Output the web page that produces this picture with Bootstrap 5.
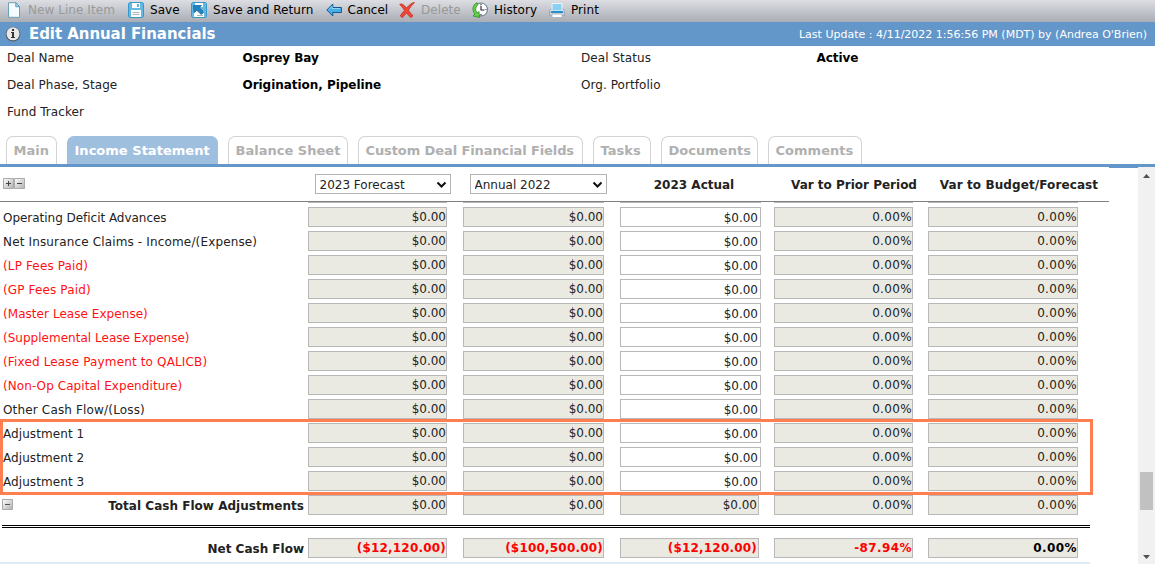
<!DOCTYPE html>
<html lang="en">
<head>
<meta charset="utf-8">
<title>Edit Annual Financials</title>
<meta name="viewport" content="width=device-width, initial-scale=1">
<link rel="stylesheet" href="https://cdn.jsdelivr.net/npm/bootstrap@5.3.0/dist/css/bootstrap.min.css">
<style>
body{font:12px/16px Verdana,"DejaVu Sans",sans-serif;color:#222;background:#fff;height:564px;overflow:hidden}
.toolbar{height:22px;background:linear-gradient(#dcdee3,#a9adb4);color:#000}
.tool{height:20px;white-space:nowrap;letter-spacing:.06px}
.tool svg{width:16px;height:16px;flex:none;margin-right:6px}
.off{color:#999}
.titlebar{height:24px;background:#6397ca;color:#fff}
.titlebar h1{font-size:15px;line-height:24px;font-weight:bold;letter-spacing:-.06px}
.updated{font-size:11px;padding-top:1px}
.facts{height:90px;grid-template-columns:235px 339px 235px 1fr;grid-auto-rows:27px;padding:4px 7px 0;align-content:start;letter-spacing:.06px}
.facts b{color:#000;letter-spacing:-.04px;padding-left:.5px}
.tabs{height:31px;gap:10px;padding-left:6px;border-bottom:3px solid #6397ca}
.tabs a{height:28px;line-height:28px;border:1px solid #d3d3d3;border-bottom:0;border-radius:7px 7px 0 0;color:#b0b0b0;font-size:13px;font-weight:bold;text-decoration:none;padding-left:6.500px;letter-spacing:.02px;white-space:nowrap}
.tabs a.current{background:#9fbfdf;border-color:#9fbfdf;color:#fff}
.body-area{height:397px}
.sheet{width:1109px;flex:none}
.heads{height:35px;border-bottom:1px solid #808080}
.g{display:grid;grid-template-columns:308px 155px 157px 154px 154px 165px;align-items:center}
.heads .form-select{font:12px/16px Verdana,"DejaVu Sans",sans-serif;height:20px;padding:2px 4px 0 3.5px;border:1px solid #b3b3b3;border-radius:0;color:#222;background-position:right 3px center;background-size:11px 11px;background-image:url("data:image/svg+xml,%3csvg xmlns='http://www.w3.org/2000/svg' viewBox='0 0 11 11'%3e%3cpath fill='none' stroke='%23111' stroke-width='2' d='M1.5 3.5l4 4 4-4'/%3e%3c/svg%3e")}
.heads b{white-space:nowrap;text-align:center;padding-top:1px}
.heads b:last-child{letter-spacing:.1px}
.peek{height:1px;margin-bottom:4px}
.peek i{height:1px;background:#b8b8b8}
.line{height:24px}
.lab{padding-left:3px;white-space:nowrap;line-height:22px;letter-spacing:.06px}
.fld{display:block;width:139px;height:20px;border:1px solid #b8b8b8;background:#eaeae2;text-align:right;line-height:18.5px;color:#222;white-space:nowrap}
.pct{letter-spacing:.35px}
.w141{width:141px}.w150{width:150px}
.edit{background:#fff;line-height:20px;padding-right:2px}
.neg{color:#f11}
.total .lab{text-align:right;padding-right:4px;font-weight:bold}
.total .fld:nth-child(4){padding-right:1px}
.marked{position:relative}
.marked::after{content:"";position:absolute;left:0;top:-4px;width:1093px;height:76px;border:3px solid #ff7f50}
.rule{height:3px;border:solid #000;border-width:1px 0;margin:6px 19px 10px 2px}
.net .fld{font-weight:bold;letter-spacing:.2px}
.net .neg{color:#f00}
.net .pct{letter-spacing:.4px}
.pm{width:11px;height:11px;flex:none}
.scroller{width:17px;margin-left:29px;background:#f1f1f1;padding:7px 0 5px}
.thumb{width:13px;height:38px;background:#c1c1c1}
.stub{width:29px;height:1px;background:#6397ca;left:1109px;top:0}
</style>
</head>
<body>
<svg class="position-absolute" width="0" height="0">
<linearGradient id="pm" x2="1" y2="1"><stop stop-color="#fff"/><stop offset="1" stop-color="#b0b0b0"/></linearGradient>
</svg>
<nav class="toolbar d-flex">
<span class="tool off d-flex align-items-center" style="width:121px;padding-left:6px"><svg viewBox="0 0 16 16"><path d="M2.500.7h7.300l3.700 4v10.600h-11z" fill="#f5fcff" stroke="#6da0b0"/><path d="M9.800.7v4h3.700z" fill="#b9e4f4" stroke="#4d9abd"/></svg><span>New Line Item</span></span>
<span class="tool d-flex align-items-center" style="width:63px;padding-left:7px"><svg viewBox="0 0 16 16"><path d="M.5 1.500 1.500.5h13l1 1v13l-1 1h-13l-1-1z" fill="#62b9e2" stroke="#3b97c6"/><path d="M4 1h8v5H4zM3 8h10v7H3z" fill="#fff"/><path d="M10 2v3" stroke="#3b97c6" stroke-width="1.500"/><path d="M4.500 10.500h7M4.500 12.500h7" stroke="#a9b4b9"/></svg><span>Save</span></span>
<span class="tool d-flex align-items-center" style="width:135px;padding-left:7px"><svg viewBox="0 0 16 16"><path d="M.5 1.500 1.500.5h13l1 1v13l-1 1h-13l-1-1z" fill="#62b9e2" stroke="#3b97c6"/><path d="M4 1h8v4H4zM3 9h10v6H3z" fill="#fff"/><path d="M6 13.500h6M9 11.500h3" stroke="#a9b4b9"/><path d="M2.500 3.500h8L8.300 5.800l4.500 4.200-2.500 2.500-4.500-4.200-2.800 2.500z" fill="#2583bb" stroke="#1a6ba6" stroke-width=".8"/></svg><span>Save and Return</span></span>
<span class="tool d-flex align-items-center" style="width:73px;padding-left:7px"><svg viewBox="0 0 16 16"><path d="M.8 8l6-6v3.500h8.600v5H6.800V14z" fill="#4aaee6" stroke="#13578e" stroke-linejoin="round"/><path d="M3 7.500l3-3v2h8" fill="none" stroke="#8dd4f6"/></svg><span style="margin-left:-.5px;letter-spacing:0">Cancel</span></span>
<span class="tool off d-flex align-items-center" style="width:73px;padding-left:7px"><svg viewBox="0 0 16 16"><path d="M.7 2.500C3 1 5 3 7.500 6 10 3 13 .5 15.500.5 13 3 10.500 6 9.500 8.500c1.500 2 3 3.500 4.500 5.500l-2.500 1.500c-1.500-1.500-2.500-3-4-4.500-1.500 1.500-2.500 3-4 4.500L1.300 14C2.500 12 4 10 5.500 8.500 4 6 2.500 4 .7 2.500z" fill="#ee4637" stroke="#c92d22" stroke-width=".8"/></svg><span>Delete</span></span>
<span class="tool d-flex align-items-center" style="width:77px;padding-left:7px"><svg viewBox="0 0 16 16"><circle cx="9" cy="7.500" r="6.500" fill="#fff" stroke="#5e7685"/><path d="M9 2v1.200M9 12v1.200M14.500 7.500h-1M9 4v4h3.500" fill="none" stroke="#223" stroke-width="1.100"/><path d="M5 .7C0 3 0 9 3 12l-2 2 6.500 1.500L7 9.500 5 11C3 8 3.500 5 6 2.500z" fill="#69cf4b" stroke="#298c25" stroke-width=".8"/></svg><span>History</span></span>
<span class="tool d-flex align-items-center" style="padding-left:7px"><svg viewBox="0 0 16 16"><path d="M.5 8.500 2 7h12l1.500 1.500v5H.5z" fill="#cbd5dc" stroke="#99a7b2"/><path d="M3 1.500h10V9H3z" fill="#8bd0f2" stroke="#e9f6fc"/><path d="M2 9h12v2H2z" fill="#2b8dc9"/><path d="M3 12h10v3.500H3z" fill="#fff" stroke="#adbac3"/></svg><span>Print</span></span>
</nav>
<header class="titlebar d-flex align-items-center justify-content-between">
<div class="d-flex align-items-center"><svg width="16" height="16" viewBox="0 0 16 16" style="margin:0 8px 0 5px"><circle cx="8" cy="8.300" r="7.300" fill="#555b60"/><circle cx="8" cy="7.800" r="6.500" fill="#e8e8e8"/><path d="M7 3h2v2H7zM6 6h3v5h1v1H6v-1h1V7H6z" fill="#333"/></svg><h1 class="m-0">Edit Annual Financials</h1></div>
<span class="updated" style="margin-right:8px">Last Update : 4/11/2022 1:56:56 PM (MDT) by (Andrea O'Brien)</span>
</header>
<section class="facts d-grid"><span>Deal Name</span><b>Osprey Bay</b><span>Deal Status</span><b>Active</b><span>Deal Phase, Stage</span><b>Origination, Pipeline</b><span>Org. Portfolio</span><b></b><span>Fund Tracker</span></section>
<nav class="tabs d-flex">
<a href="#" style="width:51px">Main</a><a href="#" class="current" style="width:151px">Income Statement</a><a href="#" style="width:120px">Balance Sheet</a><a href="#" style="width:225px;letter-spacing:-.1px">Custom Deal Financial Fields</a><a href="#" style="width:58px">Tasks</a><a href="#" style="width:97px">Documents</a><a href="#" style="width:94px">Comments</a>
</nav>
<main class="body-area d-flex position-relative">
<div class="sheet">
<div class="heads g">
<span class="d-flex" style="padding-left:3px;margin-top:-1px"><svg class="pm" viewBox="0 0 11 11"><path d="M.5.5h10v10H.5z" fill="url(#pm)" stroke="#aaa"/><path d="M3 5.500h5M5.500 3v5" stroke="#444"/></svg><svg class="pm" viewBox="0 0 11 11"><path d="M.5.5h10v10H.5z" fill="url(#pm)" stroke="#aaa"/><path d="M3 5.500h5" stroke="#444"/></svg></span>
<select class="form-select" style="width:136px;margin-left:7px"><option>2023 Forecast</option></select>
<select class="form-select" style="width:137px;margin-left:7px"><option>Annual 2022</option></select>
<b style="width:148px">2023 Actual</b><b style="width:160px">Var to Prior Period</b><b style="width:182px">Var to Budget/Forecast</b>
</div>
<div class="peek g"><span></span><i style="width:139px"></i><i class="w141"></i><i class="w141"></i><i style="width:139px"></i><i class="w150"></i></div>
<div id="lines"></div>
<div class="marked" id="adjustments"></div>
<div class="g total line" style="align-items:start"><span class="lab d-flex align-items-center justify-content-between" style="height:20px;padding-left:2px;letter-spacing:.03px"><svg class="pm" viewBox="0 0 11 11" style="margin-top:-1px"><path d="M.5.5h10v10H.5z" fill="url(#pm)" stroke="#aaa"/><path d="M3 5.500h5" stroke="#555"/></svg><span style="padding-top:1px">Total Cash Flow Adjustments</span></span><span class="fld">$0.00</span><span class="fld w141">$0.00</span><span class="fld">$0.00</span><span class="fld pct">0.00%</span><span class="fld pct w150">0.00%</span></div>
<div class="rule"></div>
<div class="g total net"><span class="lab" style="letter-spacing:0;height:20px">Net Cash Flow</span><span class="fld neg">($12,120.00)</span><span class="fld w141 neg">($100,500.00)</span><span class="fld neg">($12,120.00)</span><span class="fld neg pct">-87.94%</span><span class="fld w150 pct" style="color:#000">0.00%</span></div>
<div style="height:2px;margin:4px 19px 0 0;background:#dfeaf4"></div>
</div>
<div class="stub position-absolute"></div>
<div class="scroller d-flex flex-column align-items-center">
<svg width="7" height="4"><path d="M0 4L3.500 0 7 4z" fill="#505050"/></svg>
<div class="thumb" style="margin-top:294px"></div>
<svg class="mt-auto" width="7" height="4"><path d="M0 0h7L3.500 4z" fill="#505050"/></svg>
</div>
</main>
<script>
const line = ([name, track]) => `<div class="g line" style="align-items:start"><span class="lab ${name[0] === '(' ? 'neg' : ''}" style="letter-spacing:${track}px">${name}</span><span class="fld">$0.00</span><span class="fld w141">$0.00</span><span class="fld w141 edit">$0.00</span><span class="fld pct">0.00%</span><span class="fld pct w150">0.00%</span></div>`;
document.getElementById('lines').innerHTML = [['Operating Deficit Advances',-.03],['Net Insurance Claims - Income/(Expense)',.15],['(LP Fees Paid)',.14],['(GP Fees Paid)',.14],['(Master Lease Expense)',.05],['(Supplemental Lease Expense)',.02],['(Fixed Lease Payment to QALICB)',.15],['(Non-Op Capital Expenditure)',.07],['Other Cash Flow/(Loss)',.16]].map(line).join('');
document.getElementById('adjustments').innerHTML = [['Adjustment 1',.08],['Adjustment 2',.08],['Adjustment 3',.08]].map(line).join('');
</script>
<script src="https://cdn.jsdelivr.net/npm/bootstrap@5.3.0/dist/js/bootstrap.bundle.min.js"></script>
</body>
</html>
